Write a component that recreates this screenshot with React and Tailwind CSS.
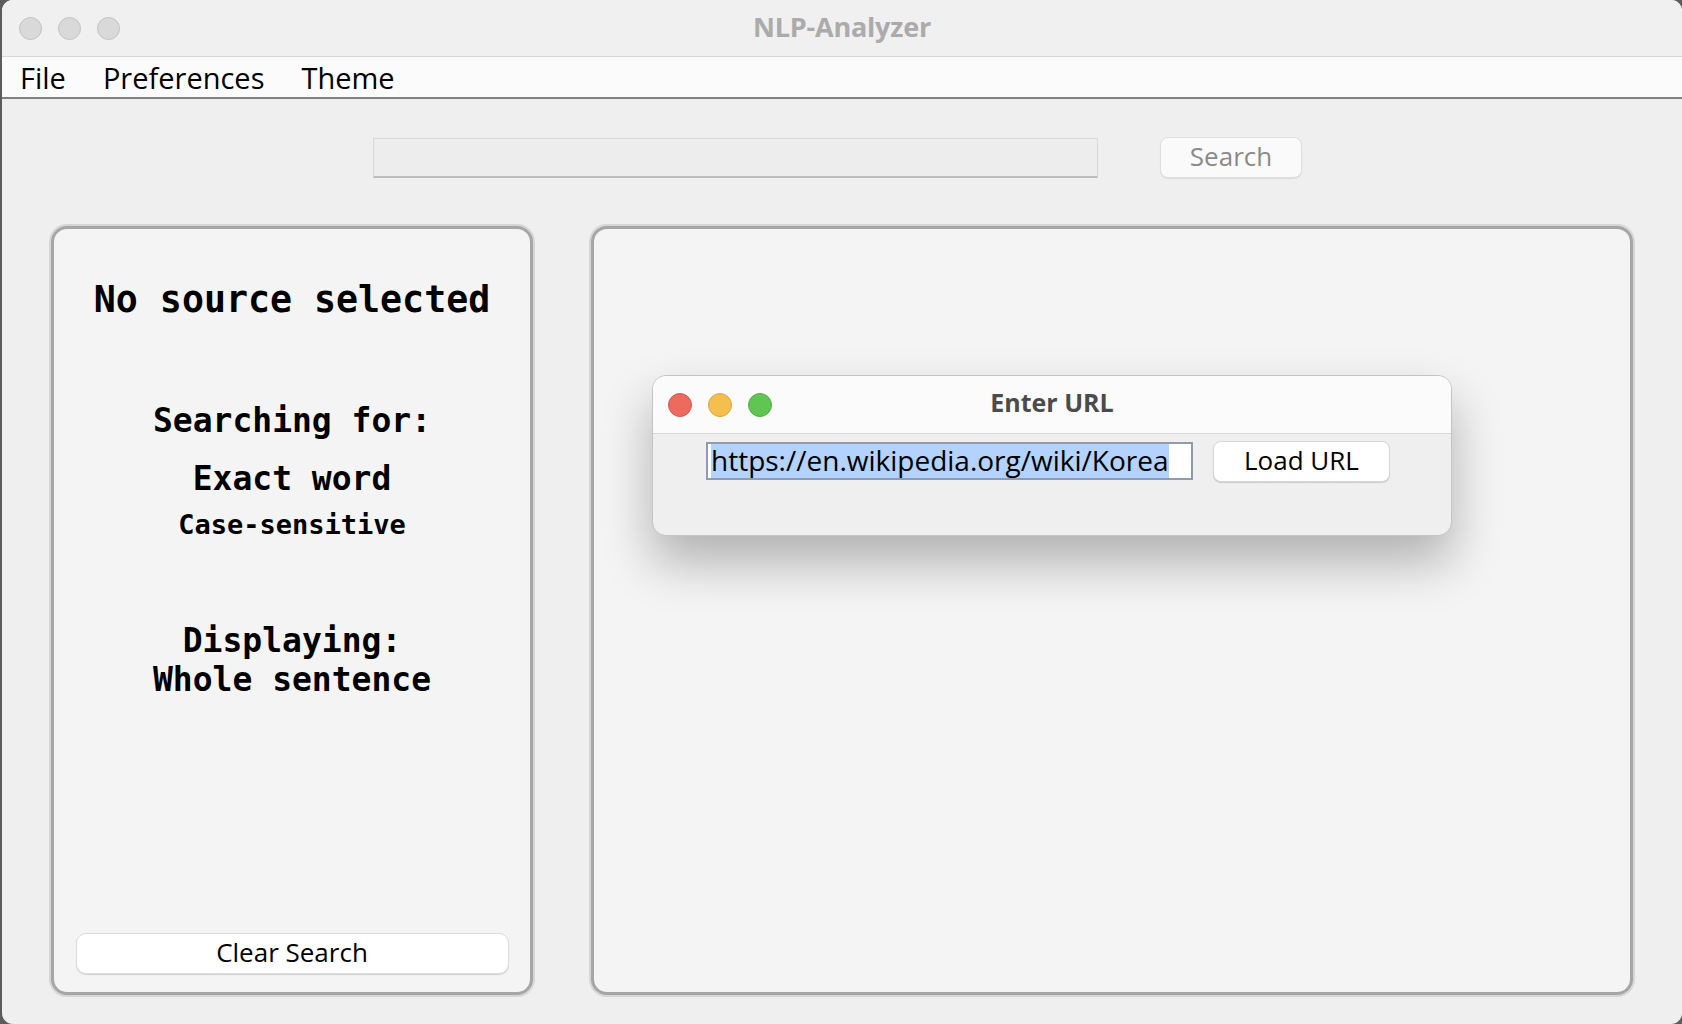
import React from "react";

const ui = { fontFamily: '"Open Sans", "Liberation Sans", sans-serif' };
const mono = { fontFamily: '"DejaVu Sans Mono", "Liberation Mono", monospace' };

export default function App() {
  return (
    <div className="w-[1682px] h-[1024px] bg-[#5c5c5c] pl-[2px] overflow-hidden" style={ui}>
      <div className="relative w-full h-full bg-[#efefef] rounded-[11px] overflow-hidden flex flex-col">
        {/* Title bar */}
        <div className="relative h-[57px] bg-[#f0f0f0] border-b border-[#d6d6d6] flex items-center">
          <div className="flex gap-[16px] pl-[17px]">
            <div className="w-[23px] h-[23px] rounded-full bg-[#d9d9d9] border border-[#c2c2c2]" />
            <div className="w-[23px] h-[23px] rounded-full bg-[#d9d9d9] border border-[#c2c2c2]" />
            <div className="w-[23px] h-[23px] rounded-full bg-[#d9d9d9] border border-[#c2c2c2]" />
          </div>
          <div className="absolute inset-0 pb-[2px] flex items-center justify-center text-[27px] font-bold text-[#ababab] tracking-[-0.2px]">
            NLP-Analyzer
          </div>
        </div>
        {/* Menu bar */}
        <div className="h-[42px] bg-[#fbfbfb] border-b-2 border-[#808080] flex items-center text-[29px] text-black leading-none">
          <span className="ml-[18px]">File</span>
          <span className="ml-[37px]">Preferences</span>
          <span className="ml-[37px]">Theme</span>
        </div>
        {/* Body */}
        <div className="flex-1 flex flex-col">
          <div className="flex items-center pt-[38px] pl-[371px]">
            <div className="w-[725px] h-[40px] bg-[#ededed] border border-[#d9d9d9] border-b-2 border-b-[#bdbdbd]" />
            <div className="ml-[62px] w-[142px] h-[41px] pb-[2px] bg-[#fafafa] border border-[#dedede] rounded-[8px] flex items-center justify-center text-[26px] text-[#8a8a8a] shadow-[0_1px_1px_rgba(0,0,0,0.08)]">
              Search
            </div>
          </div>
          <div className="flex-1 flex gap-[58px] pt-[48px] pl-[49px] pr-[49px] pb-[29px]">
            {/* Left panel */}
            <div className="w-[482px] h-full bg-[#f4f4f4] border-[3px] border-[#a6a6a6] rounded-[16px] shadow-[0_0_0_2px_#d6d6d6] flex flex-col items-center text-black font-bold" style={mono}>
              <div className="mt-[49px] text-[36.6px] leading-[44px] whitespace-pre">No source selected</div>
              <div className="mt-[79px] text-[33px] leading-[40px] whitespace-pre">Searching for:</div>
              <div className="mt-[18px] text-[33px] leading-[40px] whitespace-pre">Exact word</div>
              <div className="mt-[9px] text-[27px] leading-[34px] whitespace-pre">Case-sensitive</div>
              <div className="mt-[79px] text-[33px] leading-[39px] whitespace-pre">Displaying:</div>
              <div className="text-[33px] leading-[39px] whitespace-pre">Whole sentence</div>
              <div className="flex-1" />
              <div className="mb-[18px] w-[433px] h-[41px] pb-[2px] bg-white rounded-[10px] border border-[#dcdcdc] shadow-[0_1px_1px_rgba(0,0,0,0.15)] flex items-center justify-center text-[26px] font-normal" style={ui}>
                Clear Search
              </div>
            </div>
            {/* Right panel */}
            <div className="flex-1 h-full bg-[#f4f4f4] border-[3px] border-[#a6a6a6] rounded-[16px] shadow-[0_0_0_2px_#d6d6d6]" />
          </div>
        </div>

        {/* Dialog window */}
        <div className="absolute left-[650px] top-[375px] w-[800px] h-[161px] rounded-[14px] border border-[#c4c4c4] bg-[#efefef] overflow-hidden shadow-[0_26px_50px_rgba(0,0,0,0.28)] flex flex-col">
          <div className="relative h-[58px] bg-[#fbfbfb] border-b border-[#d8d8d8] flex items-center">
            <div className="flex gap-[16px] pl-[15px]">
              <div className="w-[24px] h-[24px] rounded-full bg-[#ec6a5e] border border-[#d45a4f]" />
              <div className="w-[24px] h-[24px] rounded-full bg-[#f4bf4f] border border-[#d9a83f]" />
              <div className="w-[24px] h-[24px] rounded-full bg-[#61c554] border border-[#51ad45]" />
            </div>
            <div className="absolute inset-0 pb-[3px] flex items-center justify-center text-[25px] font-bold text-[#4b4b4b]">
              Enter URL
            </div>
          </div>
          <div className="flex items-start pt-[7px] pl-[53px]">
            <div className="mt-[1px] w-[487px] h-[38px] bg-white border-2 border-[#8d9cb0] flex items-center pl-[3px]">
              <span className="bg-[#b3d2fe] text-[28px] leading-[32px] pb-[2px] text-black whitespace-pre">https://en.wikipedia.org/wiki/Korea</span>
            </div>
            <div className="ml-[20px] w-[177px] h-[41px] pb-[3px] bg-white rounded-[8px] border border-[#d6d6d6] shadow-[0_1px_1px_rgba(0,0,0,0.15)] flex items-center justify-center text-[26px] text-black">
              Load URL
            </div>
          </div>
        </div>
      </div>
    </div>
  );
}
